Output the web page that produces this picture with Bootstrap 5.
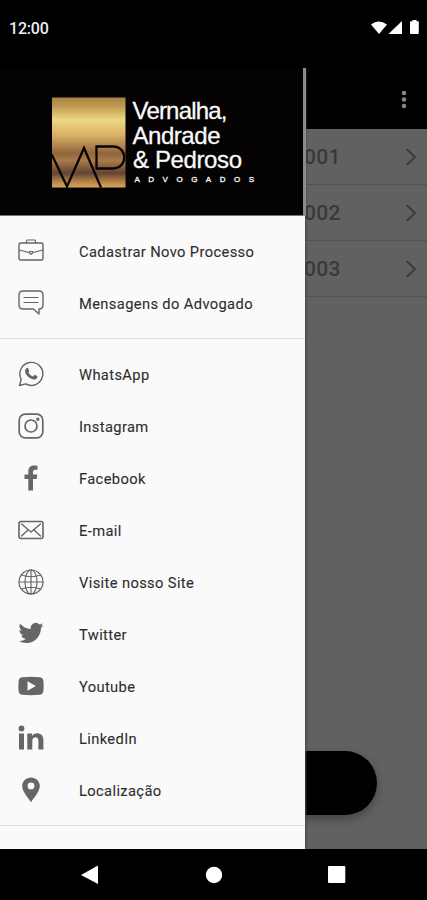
<!DOCTYPE html>
<html lang="pt-BR">
<head>
<meta charset="utf-8">
<meta name="viewport" content="width=device-width, initial-scale=1">
<title>Vernalha, Andrade &amp; Pedroso</title>
<link href="https://cdn.jsdelivr.net/npm/bootstrap@5.3.0/dist/css/bootstrap.min.css" rel="stylesheet">
<style>
body{font-family:Roboto,sans-serif;background:#000}
.screen{width:427px;height:900px;background:#000}
.status{height:68px;padding:0 8px 12px 9px;font-size:16px;font-weight:500;color:#eee}
.clock{letter-spacing:-.2px;padding-top:1px}
.stage{height:781px;background:#616161}
.appbar{height:61px;padding-right:16px}
.process{height:56px;padding:0 10px 0 304px;border-bottom:1px solid #525252;color:#393939;font-size:21px;font-weight:500;letter-spacing:.3px}
.process span{padding-top:2px}
.drawer{width:304.5px;background:#fafafa;box-shadow:1px 0 2px #444}
.edge{left:303px;width:3px;height:148px;background:#8b8b8b}
.brand{height:148px;background:#050203;border-bottom:1px solid #777}
.group{padding:9px 0 8.500px}
.group + .group{border-top:1px solid #dedede}
.item{height:52.1px;padding-left:18px;gap:35px;font-size:14.7px;letter-spacing:.37px;color:#2e2e2e;-webkit-text-stroke:.1px #2e2e2e}
.item span{padding-top:2px}
.item svg{width:26px;height:26px;flex:none;color:#666}
.line{fill:none;stroke:currentColor;stroke-width:1.4;stroke-linejoin:round;stroke-linecap:round}
.pill{left:200px;top:683px;width:177px;height:64px;background:#000;box-shadow:0 4px 10px rgba(0,0,0,.3)}
.keys{height:51px}
</style>
<script src="https://cdn.jsdelivr.net/npm/bootstrap@5.3.0/dist/js/bootstrap.bundle.min.js"></script>
</head>
<body>
<div class="screen d-flex flex-column overflow-hidden">
  <header class="status d-flex align-items-center justify-content-between">
    <span class="clock">12:00</span>
    <svg width="49" height="16" viewBox="0 0 49 16" fill="#fff"><path d="M1 4.500Q8.500-1.500 17 4.500L9 14Z"/><path d="M32 1V14H18.500Z"/><path d="M41 1.300h1.500V0h4v1.300H48q.8 0 .8.800V13q0 1-.8 1h-7q-1 0-1-1V2.200q0-.9 1-.9Z"/></svg>
  </header>
  <main class="stage position-relative overflow-hidden">
    <div class="appbar bg-black d-flex align-items-center justify-content-end">
      <svg width="14" height="20" viewBox="0 0 14 20" fill="#858585"><circle cx="7" cy="4" r="2.300"/><circle cx="7" cy="10.500" r="2.300"/><circle cx="7" cy="17" r="2.300"/></svg>
    </div>
    <div>
      <div class="process d-flex align-items-center justify-content-between"><span>001</span><svg width="13" height="20" viewBox="0 0 13 20" fill="none" stroke="#3e3e3e" stroke-width="2.200"><path d="M2.500 2L11 10L2.500 18"/></svg></div>
      <div class="process d-flex align-items-center justify-content-between"><span>002</span><svg width="13" height="20" viewBox="0 0 13 20" fill="none" stroke="#3e3e3e" stroke-width="2.200"><path d="M2.500 2L11 10L2.500 18"/></svg></div>
      <div class="process d-flex align-items-center justify-content-between"><span>003</span><svg width="13" height="20" viewBox="0 0 13 20" fill="none" stroke="#3e3e3e" stroke-width="2.200"><path d="M2.500 2L11 10L2.500 18"/></svg></div>
    </div>
    <div class="pill position-absolute rounded-pill"></div>

    <nav class="drawer position-absolute top-0 start-0 h-100 overflow-hidden">
      <div class="brand">
        <svg class="d-block" width="304" height="147" viewBox="0 68 304 147">
          <defs><linearGradient id="gold" x1="0" y1="0" x2="0" y2="1">
            <stop offset="0" stop-color="#a88145"/><stop offset=".1" stop-color="#c19b52"/><stop offset=".25" stop-color="#ecd982"/><stop offset=".42" stop-color="#d9af67"/><stop offset=".62" stop-color="#91663d"/><stop offset=".7" stop-color="#a77a4a"/><stop offset=".84" stop-color="#624434"/><stop offset=".93" stop-color="#b18146"/><stop offset="1" stop-color="#d9a759"/>
          </linearGradient></defs>
          <rect x="52" y="97.500" width="73.500" height="90" fill="url(#gold)"/>
          <path d="M51.500 154L67 186.500L84 148L101 187.500M96.500 169V146.500H113C128 146.500 128 168.500 113 168.500H96" fill="none" stroke="#080404" stroke-width="2.300"/>
          <g fill="#fafafa" stroke="#fafafa" stroke-width=".3" font-family="Liberation Sans, Arial, sans-serif" font-size="24">
            <text x="132.500" y="119" textLength="95">Vernalha,</text>
            <text x="132.500" y="143.500" textLength="88">Andrade</text>
            <text x="133" y="168" textLength="109">&amp; Pedroso</text>
            <text x="134.500" y="182" font-size="8" textLength="119.500">ADVOGADOS</text>
          </g>
        </svg>
      </div>
      <div class="group">
        <div class="item d-flex align-items-center"><svg viewBox="0 0 26 26" class="line"><rect x="1" y="5" width="24" height="17" rx="1.500"/><path d="M8 5L9 2H17L18 5M1 12L11 14.500M15 14.500L25 12M11.500 13.500H14.500V15L13 16.300L11.500 15Z" stroke-width="1.200"/></svg><span>Cadastrar Novo Processo</span></div>
        <div class="item d-flex align-items-center"><svg viewBox="0 0 26 26" class="line"><path d="M5 1H21Q25 1 25 5V15Q25 19 21 19V24L15.500 19H5Q1 19 1 15V5Q1 1 5 1Z"/><path d="M6 7.500H20M6 12.500H20" stroke-width="1.200"/></svg><span>Mensagens do Advogado</span></div>
      </div>
      <div class="group">
        <div class="item d-flex align-items-center"><svg viewBox="0 0 26 26"><path class="line" d="M1.500 24.500L3.200 18.300A11.500 11.500 0 1 1 7.700 22.900Z"/><path fill="currentColor" d="M8.700 7Q9.300 6.600 10 7.100L11.300 10Q11.200 10.800 10.400 11.500Q11.700 14.300 14.900 15.500L16.300 14Q17 13.800 19.500 15.300Q19.500 17.500 17.800 18.300C15 19.500 9.600 16.200 7.700 12.700Q6 9.300 8.700 7Z"/></svg><span>WhatsApp</span></div>
        <div class="item d-flex align-items-center"><svg viewBox="0 0 26 26" class="line"><rect x="1.200" y="1.200" width="23.600" height="23.600" rx="6" stroke-width="1.700"/><circle cx="13" cy="13" r="6" stroke-width="1.700"/><circle cx="19.800" cy="6.200" r="1"/></svg><span>Instagram</span></div>
        <div class="item d-flex align-items-center"><svg viewBox="0 0 26 26" fill="currentColor"><path d="M10.300 25.500V14H6.500V9.600H10.300V6.500C10.300 2.500 12.700.6 16.200.6L19.500.8V4.700H17.200Q15 4.700 15 6.800V9.600H19.300L18.700 14H15V25.500Z"/></svg><span>Facebook</span></div>
        <div class="item d-flex align-items-center"><svg viewBox="0 0 26 26" class="line"><rect x="1" y="4.500" width="24" height="17" rx="2" stroke-width="1.600"/><path d="M3.500 7L13 15L22.500 7M3.500 19L9.700 13.200M22.500 19L16.300 13.200"/></svg><span>E-mail</span></div>
        <div class="item d-flex align-items-center"><svg viewBox="0 0 26 26" class="line"><g stroke-width="1.150"><circle cx="13" cy="13" r="12"/><ellipse cx="13" cy="13" rx="6" ry="12"/><path d="M13 1V25M1 13H25M3.500 6Q13 9.500 22.500 6M3.500 20Q13 16.500 22.500 20"/></g></svg><span>Visite nosso Site</span></div>
        <div class="item d-flex align-items-center"><svg viewBox="0 0 26 26" fill="currentColor"><path transform="translate(.5 -.5) scale(1.040)" d="M23.950 4.570a10 10 0 0 1-2.820.77 4.960 4.960 0 0 0 2.160-2.720c-.95.550-2 .95-3.130 1.180a4.920 4.920 0 0 0-8.380 4.480C7.690 8.100 4.070 6.130 1.640 3.160a4.920 4.920 0 0 0 1.520 6.570 4.900 4.900 0 0 1-2.230-.61v.06a4.920 4.920 0 0 0 3.950 4.830 5 5 0 0 1-2.210.08 4.940 4.940 0 0 0 4.600 3.420A9.870 9.870 0 0 1 0 19.540a14 14 0 0 0 7.550 2.210c9.050 0 14-7.500 14-13.980l-.02-.64a9.940 9.940 0 0 0 2.420-2.560Z"/></svg><span>Twitter</span></div>
        <div class="item d-flex align-items-center"><svg viewBox="0 0 26 26" fill="currentColor" fill-rule="evenodd"><path d="M4.500 4.200Q13 3.500 21.500 4.200Q25 4.500 25.400 8Q25.900 13 25.400 18Q25 21.500 21.500 21.800Q13 22.500 4.500 21.800Q1 21.500.6 18Q.1 13 .6 8Q1 4.500 4.500 4.200ZM9.500 8.300V17.700L17.800 13Z"/></svg><span>Youtube</span></div>
        <div class="item d-flex align-items-center"><svg viewBox="0 0 26 26" fill="currentColor"><circle cx="3.500" cy="3.500" r="2.900"/><path d="M1 8.500H6V24.500H1ZM9.300 8.500H14V10.700C16.800 6.500 25.400 7.200 25.400 14.800V24.500H20.400V15.800C20.400 11 14.300 11.200 14.300 15.800V24.500H9.300Z"/></svg><span>LinkedIn</span></div>
        <div class="item d-flex align-items-center"><svg viewBox="0 0 26 26" fill="currentColor" fill-rule="evenodd"><path d="M13 .5C8 .5 4.200 4.300 4.200 9C4.200 15 10.500 20.500 13 25.500C15.500 20.500 21.800 15 21.800 9C21.800 4.300 18 .5 13 .5ZM13 5.500A3.400 3.400 0 1 1 13 12.300A3.400 3.400 0 1 1 13 5.500Z"/></svg><span>Localização</span></div>
      </div>
      <div class="group"></div>
    </nav>
    <div class="edge position-absolute top-0"></div>
  </main>
  <footer class="keys d-flex align-items-center justify-content-center">
    <svg width="427" height="51" viewBox="0 849 427 51" fill="#fff"><path d="M81 875L98 865.500V884Z"/><circle cx="214" cy="875" r="8.200"/><rect x="328" y="866" width="17.300" height="17" rx="1"/></svg>
  </footer>
</div>
</body>
</html>
